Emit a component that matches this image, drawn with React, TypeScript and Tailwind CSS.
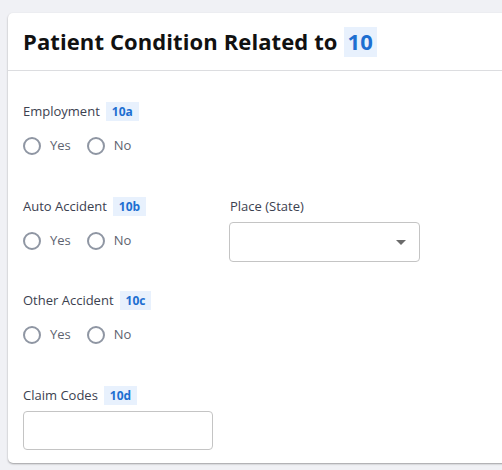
const Tag = ({ children, big }: { children: string; big?: boolean }) =>
	big ? (
		<span className="ml-[6px] inline-flex h-[30px] items-center bg-[#e8f1fd] px-[4px] tracking-normal text-[#1d6fd1]">
			{children}
		</span>
	) : (
		<span className="ml-[6px] inline-flex h-[19px] items-center bg-[#e8f1fd] px-[6px] text-[12px] font-bold text-[#1d6fd1]">
			{children}
		</span>
	);

const FieldLabel = ({ text, tag }: { text: string; tag?: string }) => (
	<div className="flex h-[19px] items-center text-[13px] text-[#3c4150]">
		<span>{text}</span>
		{tag && <Tag>{tag}</Tag>}
	</div>
);

const Radio = ({ label }: { label: string }) => (
	<label className="flex items-center">
		<span className="h-[18px] w-[18px] rounded-full border-2 border-[#8f96a3] bg-white" />
		<span className="ml-[9px] text-[13px] text-[#5d6370]">{label}</span>
	</label>
);

const YesNo = () => (
	<div className="mt-[16px] flex h-[18px] items-center gap-[16px]">
		<Radio label="Yes" />
		<Radio label="No" />
	</div>
);

export default function App() {
	return (
		<div className="h-[470px] w-[502px] overflow-hidden bg-[#f0f1f5] pl-2 pt-[13px] font-['Open_Sans',sans-serif]">
			<div className="mr-[-10px] h-[450px] rounded-[5px] bg-white shadow-[0_1px_2px_rgba(0,0,0,0.35)]">
				<div className="flex h-[58px] items-center border-b border-[#dcdde0] pl-[15px] text-[22px] font-bold tracking-[0.1px] text-[#111]">
					<span>Patient Condition Related to</span>
					<Tag big>10</Tag>
				</div>
				<div className="pl-[15px] pt-[31px]">
					<FieldLabel text="Employment" tag="10a" />
					<YesNo />

					<div className="mt-[42px] flex">
						<div className="w-[207px]">
							<FieldLabel text="Auto Accident" tag="10b" />
							<YesNo />
						</div>
						<div>
							<FieldLabel text="Place (State)" />
							<div className="relative mt-[6px] ml-[-1px] h-[40px] w-[191px] rounded-[4px] border border-[#c4c4c4]">
								<span className="absolute right-[13px] top-[17px] h-0 w-0 border-x-[5px] border-t-[5px] border-x-transparent border-t-[#6b6b6b]" />
							</div>
						</div>
					</div>

					<div className="mt-[29px]">
						<FieldLabel text="Other Accident" tag="10c" />
						<YesNo />
					</div>

					<div className="mt-[42px]">
						<FieldLabel text="Claim Codes" tag="10d" />
						<div className="mt-[6px] h-[39px] w-[190px] rounded-[4px] border border-[#c4c4c4]" />
					</div>
				</div>
			</div>
		</div>
	);
}
